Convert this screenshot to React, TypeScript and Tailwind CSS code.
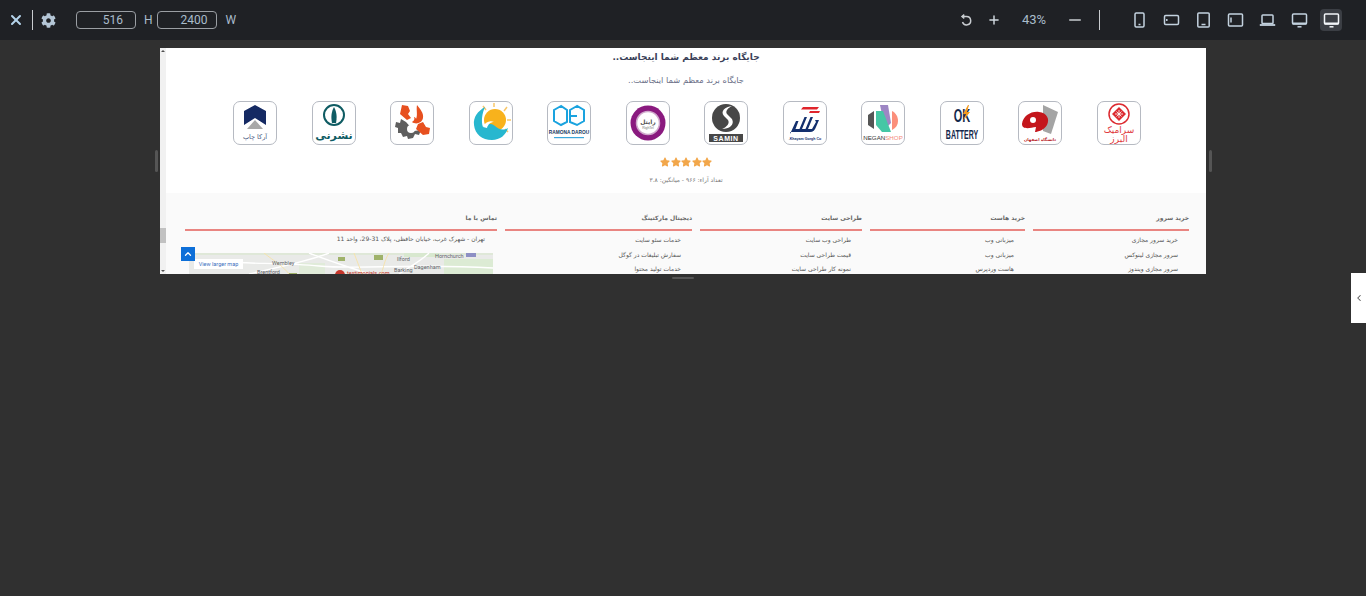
import { ChevronLeft, ChevronUp, Minus, Plus, X } from "lucide-react";
import { FaCog, FaStar } from "react-icons/fa";

const persian = "font-['DejaVu_Sans','Noto_Sans',sans-serif]";

const DeviceIcon = ({ kind, active }: { kind: string; active?: boolean }) => {
	const shapes: Record<string, React.ReactNode> = {
		phone: (
			<>
				<rect x="5" y="2" width="9" height="14" rx="1.2" />
				<path d="M8.5 13.5h2" />
			</>
		),
		phoneWide: (
			<>
				<rect x="2.5" y="4.5" width="14" height="9" rx="1.2" />
				<path d="M4.8 8v2" />
			</>
		),
		tablet: (
			<>
				<rect x="3.8" y="2" width="11.4" height="14" rx="1" />
				<path d="M7.5 13.5h4" />
			</>
		),
		tabletWide: (
			<>
				<rect x="2.5" y="3" width="14" height="12" rx="1" />
				<path d="M5 6.5v5" />
			</>
		),
		laptop: (
			<>
				<rect x="4" y="4" width="11" height="8.5" rx=".8" />
				<path d="M1.8 14h15.4" strokeWidth="1.8" />
			</>
		),
		monitor: (
			<>
				<rect x="2.5" y="3" width="14" height="10" rx="1" />
				<path d="M2.5 12.5h14" strokeWidth="2" />
				<path d="M7.5 15.8h4" />
			</>
		),
	};
	return (
		<span className={`flex h-[22px] w-[22px] items-center justify-center rounded ${active ? "bg-[#3b3e44]" : ""}`}>
			<svg width="19" height="19" viewBox="0 0 19 19" fill="none" stroke={active ? "#f2f5f8" : "#c3d2df"} strokeWidth="1.5">
				{shapes[kind]}
			</svg>
		</span>
	);
};

const Toolbar = () => (
	<div className="flex h-10 shrink-0 items-center justify-between bg-[#1f2125] pl-[8px] pr-[24px] text-[#a9bccb]">
		<div className="flex items-center">
			<X className="h-[16px] w-[16px] text-[#b4d3ea]" strokeWidth={3} />
			<span className="ml-[8px] h-5 w-px bg-[#c9ccd0]" />
			<FaCog className="ml-[8px] h-[15px] w-[15px] text-[#b4c6d6]" />
			<div className="ml-[20px] flex h-[18px] w-[60px] items-center justify-end rounded border border-[#9b9fa4] pr-[12px] font-['Roboto',sans-serif] text-[12px]">516</div>
			<span className="ml-[8px] font-['Roboto',sans-serif] text-[12px]">H</span>
			<div className="ml-[4px] flex h-[18px] w-[60px] items-center justify-end rounded border border-[#9b9fa4] pr-[8px] font-['Roboto',sans-serif] text-[12px]">2400</div>
			<span className="ml-[9px] font-['Roboto',sans-serif] text-[12px]">W</span>
		</div>
		<div className="flex items-center">
			<svg width="13" height="13" viewBox="0 0 13 13" fill="none" stroke="#c8ccd0" strokeWidth="1.5">
				<path d="M2 2.500h4.500a4.200 4.200 0 1 1-4 5.500" />
				<path d="M4.300.6 2 2.500l2.300 1.900" />
			</svg>
			<Plus className="ml-[14px] h-[14px] w-[14px] text-[#d0d8de]" strokeWidth={2.5} />
			<span className="ml-[21px] w-[26px] font-['Roboto',sans-serif] text-[13px]">43%</span>
			<Minus className="ml-[18px] h-[18px] w-[18px] text-[#c8ccd0]" strokeWidth={2} />
			<span className="ml-[15px] h-5 w-px bg-[#c9ccd0]" />
			<div className="ml-[28px] flex items-center gap-[10px]">
				<DeviceIcon kind="phone" />
				<DeviceIcon kind="phoneWide" />
				<DeviceIcon kind="tablet" />
				<DeviceIcon kind="tabletWide" />
				<DeviceIcon kind="laptop" />
				<DeviceIcon kind="monitor" />
				<DeviceIcon kind="monitor" active />
			</div>
		</div>
	</div>
);

const LogoBox = ({ children }: { children: React.ReactNode }) => (
	<div className="h-[44px] w-[44px] overflow-hidden rounded-[7px] border border-[#b6bac2] bg-white">
		<svg width="42" height="42" viewBox="0 0 42 42">
			{children}
		</svg>
	</div>
);

const logos = [
	<>
		<path d="M10 9 21 3l11 6v14L21 16 10 23z" fill="#152a63" />
		<path d="M21 18l8 9H13z" fill="#a8a8a8" />
		<text x="21" y="37" textAnchor="middle" fontSize="6.500" fill="#4a5a80" fontFamily="DejaVu Sans">آرکا چاپ</text>
	</>,
	<>
		<circle cx="21" cy="13" r="10" fill="none" stroke="#0f5c63" strokeWidth="2" />
		<path d="M21 5c-3 5-3 11-2 16h4c1-5 1-11-2-16z" fill="#0f5c63" />
		<text x="21" y="37" textAnchor="middle" fontSize="11" fontWeight="700" fill="#0f5c63" fontFamily="DejaVu Sans">نشرنی</text>
	</>,
	<>
		<path d="M5 20l4 1 1-4 5 3 8 9 7-1-2 5-4-1-2 4-5 1-1-3-4 1-2-4-3 0 0-5-3-1z" fill="#5f5f5f" />
		<circle cx="20" cy="27" r="4" fill="#fff" />
		<path d="M11 3l6 1 2 5-2 3 3 4-4 2-7-6z" fill="#e7501f" />
		<path d="M26 3c3 4 7 8 6 13-1 5-7 7-11 4 2-1 3-3 2-5 1 0 2 1 2 2 2-4 0-9 1-14z" fill="#e7501f" />
		<path d="M27 22l5-2 3 5 4 1-1 6-6 1-7-6z" fill="#e7501f" />
	</>,
	<>
		<circle cx="25" cy="18" r="11" fill="#f8b21c" />
		<path d="M24 1v4M37 5l-3 4M41 18h-4M38 30l-3-3M13 4l3 4" stroke="#f8c76a" strokeWidth="1.500" />
		<path d="M15 5C8 9 3 15 4 23c1 9 8 15 18 15 8 0 14-5 16-12-5 3-10 1-13-2-4-3-9-3-12 1-2-5-1-14 2-20z" fill="#27b7cf" />
		<path d="M13 25c2-5 7-7 11-5-3 0-6 2-7 6z" fill="#fff" />
	</>,
	<>
		<path d="M13 4 6 8v11l7 4 6-3V8zM29 4l-7 4v12l7 3 7-4V8zM22 14h7" fill="none" stroke="#1aa3df" strokeWidth="2" />
		<text x="21" y="32" textAnchor="middle" fontSize="4.800" fontWeight="700" fill="#17375e" fontFamily="Liberation Sans">RAMONA DAROU</text>
		<rect x="6" y="35" width="30" height="1.200" fill="#3aa7dc" />
	</>,
	<>
		<circle cx="21" cy="21" r="17.500" fill="#8a1a7f" />
		<circle cx="21" cy="21" r="11.500" fill="#fff" stroke="#cfa8cb" strokeWidth="1.500" />
		<text x="21" y="22" textAnchor="middle" fontSize="6" fontWeight="700" fill="#555" fontFamily="DejaVu Sans">رایتل</text>
		<text x="21" y="27" textAnchor="middle" fontSize="3.500" fill="#777" fontFamily="Liberation Sans">RighTel</text>
	</>,
	<>
		<circle cx="21" cy="16" r="14" fill="#474747" />
		<path d="M27 4c-7 1-12 5-8 10l4 4c2 3-1 7-6 9 7 0 13-4 10-10l-5-5c-2-3 1-6 5-8z" fill="#fff" />
		<rect x="4" y="32" width="34" height="8" fill="#474747" />
		<text x="21" y="39" textAnchor="middle" fontSize="7" fontWeight="700" fill="#fff" fontFamily="Liberation Sans" letterSpacing=".6">SAMIN</text>
	</>,
	<>
		<path d="M19 5h16l-2 2.500H17zM26 9h10l-1 2H25z" fill="#e0252c" />
		<path d="M6 32l6-13h2.500l-3 8h4l5-12h2.500l-5 12h3.500l5-12h2.500l-5 12h4l4-7-1-2h4l-3 7c-1 3-3 5-6 5H6z" fill="#14306e" />
		<text x="21" y="38" textAnchor="middle" fontSize="3.600" fontWeight="700" fill="#14306e" fontFamily="Liberation Sans">Khayam Gorgh Co.</text>
	</>,
	<>
		<path d="M18 3h8l3 18-6 6z" fill="#9d86c4" />
		<path d="M14 9h7l8 21h-9l-6-7z" fill="#45c7a5" />
		<path d="M6 13l6-4v18l-6-4z" fill="#555" />
		<path d="M30 9c4 2 6 6 6 10s-2 7-6 9z" fill="#fb8f7b" />
		<text x="21" y="38" textAnchor="middle" fontSize="6.200" fill="#333" fontFamily="Liberation Sans">NEGAN<tspan fill="#f48a7b">SHOP</tspan></text>
	</>,
	<>
		<text x="21" y="0" transform="translate(0 20) scale(1 1.6)" textAnchor="middle" fontSize="11" fontWeight="700" fill="#14284b" fontFamily="Liberation Sans">OK</text>
		<path d="M27 3l-5 9h3l-3 7 7-9h-3l2-7z" fill="#f39a1e" />
		<text x="21" y="0" transform="translate(0 37) scale(1 1.8)" textAnchor="middle" fontSize="7" fontWeight="700" fill="#14284b" fontFamily="Liberation Sans">BATTERY</text>
	</>,
	<>
		<path d="M24 3l15 7-7 22-8-3z" fill="#a4a4a4" />
		<path d="M3 22c1-8 9-13 17-12 8 1 11 7 8 13-3 5-9 7-12 7l1-5c-6 1-14 3-14-3z" fill="#c4161c" />
		<circle cx="14" cy="18" r="3" fill="#fff" />
		<text x="21" y="39" textAnchor="middle" fontSize="4" fontWeight="700" fill="#b72025" fontFamily="DejaVu Sans">دانشگاه اصفهان</text>
	</>,
	<>
		<circle cx="21" cy="12" r="10" fill="none" stroke="#dc2a30" strokeWidth="1.500" />
		<path d="M21 5l7 7-7 7-7-7z" fill="#dc2a30" />
		<path d="M21 8v8M17 12h8M18.500 9.500l5 5M23.500 9.500l-5 5" stroke="#fff" strokeWidth=".8" />
		<text x="21" y="31" textAnchor="middle" fontSize="9" fill="#e0383d" fontFamily="DejaVu Sans">سرامیک</text>
		<text x="21" y="40" textAnchor="middle" fontSize="9" fill="#e0383d" fontFamily="DejaVu Sans">البرز</text>
	</>,
];

const footerColumns = [
	{ title: "دیجیتال مارکتینگ", width: "w-[187px]", links: ["خدمات سئو سایت", "سفارش تبلیغات در گوگل", "خدمات تولید محتوا"] },
	{ title: "طراحی سایت", width: "w-[162px]", links: ["طراحی وب سایت", "قیمت طراحی سایت", "نمونه کار طراحی سایت"] },
	{ title: "خرید هاست", width: "w-[155px]", links: ["میزبانی وب", "میزبانی وب", "هاست وردپرس"] },
	{ title: "خرید سرور", width: "w-[156px]", links: ["خرید سرور مجازی", "سرور مجازی لینوکس", "سرور مجازی ویندوز"] },
];

const MapTile = () => (
	<div dir="ltr" className="relative mr-[4px] mt-[9px] h-[21px] w-[304px] overflow-hidden bg-[#e9eae8]">
		<svg width="304" height="21" viewBox="0 0 304 21" className="absolute inset-0">
			<rect x="0" y="0" width="304" height="2" fill="#dfe8d8" />
			<rect x="255" y="6" width="49" height="15" fill="#dcebd4" />
			<rect x="215" y="0" width="35" height="4" fill="#d8e8cf" />
			<rect x="110" y="10" width="26" height="11" fill="#e0ebd9" />
			<path d="M0 6C50 12 90 9 130 13s90-3 174 2M60 21C90 14 120 8 140 0M120 0c20 8 40 14 60 21M240 0c-8 8-20 14-30 21" stroke="#fff" strokeWidth="1.400" fill="none" />
			<path d="M75 0c10 8 20 14 25 21M165 0l8 21M200 0c-5 8-5 14-8 21" stroke="#f6e3ad" strokeWidth="1" fill="none" />
			<rect x="149" y="4" width="7" height="4" fill="#9fb26a" />
			<rect x="185" y="2" width="9" height="5" fill="#9fb26a" />
			<rect x="100" y="20" width="8" height="1" fill="#9fb26a" />
			<rect x="277" y="0" width="10" height="4" fill="#8d8fc4" />
			<circle cx="151" cy="22" r="5" fill="#c5372c" />
			<g fontFamily="Roboto" fontSize="5.500" fill="#5f6368">
				<text x="83" y="12">Wembley</text>
				<text x="68" y="21">Brentford</text>
				<text x="208" y="8">Ilford</text>
				<text x="205" y="18.500">Barking</text>
				<text x="225" y="16">Dagenham</text>
				<text x="246" y="5">Hornchurch</text>
				<text x="158" y="22" fill="#c5372c">testimonials.com</text>
			</g>
		</svg>
		<div className="absolute left-[5px] top-[6px] flex h-[10px] w-[49px] items-center justify-center bg-white font-['Roboto',sans-serif] text-[5.500px] text-[#3a6fc0]">View larger map</div>
	</div>
);

const Preview = () => (
	<div className="flex h-[226px] w-[1046px] overflow-hidden bg-white">
		<div className="relative flex w-[6px] shrink-0 flex-col justify-between bg-[#f1f1f1]">
			<span className="mx-auto mt-[2px] h-0 w-0 border-x-2 border-b-2 border-x-transparent border-b-[#505050]" />
			<span className="absolute left-0 top-[180px] h-[15px] w-full bg-[#c1c1c1]" />
			<span className="mx-auto mb-[2px] h-0 w-0 border-x-2 border-t-2 border-x-transparent border-t-[#505050]" />
		</div>
		<div dir="rtl" className={`relative min-w-0 flex-1 ${persian}`}>
			<div className="flex h-[145px] flex-col items-center">
				<h2 className="mt-[1px] text-[9px] leading-4 font-bold text-[#3a3f58]">جایگاه برند معظم شما اینجاست..</h2>
				<p className="mt-[9px] text-[8.300px] leading-3 text-[#6b7088]">جایگاه برند معظم شما اینجاست..</p>
				<div className="mt-[15px] flex w-full justify-between pl-[67px] pr-[65px]">
					{[...logos].reverse().map((logo, i) => (
						<LogoBox key={i}>{logo}</LogoBox>
					))}
				</div>
				<div className="mt-[12px] flex gap-[0.5px]">
					{[0, 1, 2, 3, 4].map((i) => (
						<FaStar key={i} className="h-[10px] w-[10px] text-[#f2a74b]" />
					))}
				</div>
				<p className="mt-[7px] text-[6px] leading-3 text-[#777]">تعداد آراء: ۹۶۶ - میانگین: ۳.۸</p>
			</div>
			<div className="flex h-[81px] gap-[8px] bg-[#fafafa] pr-[17px] pt-[18px]">
				{[...footerColumns].reverse().map((col) => (
					<div key={col.title} className={`shrink-0 ${col.width}`}>
						<h3 className="h-[20px] border-b-2 border-[#e98581] text-[6px] leading-[13px] font-bold text-[#666]">{col.title}</h3>
						<ul className="pr-[11px] pt-[4px] text-[6px] font-medium text-[#555]">
							{col.links.map((link, i) => (
								<li key={i} className="h-[14.700px] leading-[10px]">{link}</li>
							))}
						</ul>
					</div>
				))}
				<div className="w-[312px] shrink-0">
					<h3 className="h-[20px] border-b-2 border-[#e98581] text-[6px] leading-[13px] font-bold text-[#666]">تماس با ما</h3>
					<p className="pr-[12px] pt-[3px] text-[6px] leading-[10px] text-[#555]">تهران - شهرک غرب، خیابان حافظی، پلاک 31-29، واحد 11</p>
					<MapTile />
				</div>
			</div>
			<button className="absolute left-[15px] top-[199px] flex h-[14px] w-[14px] items-center justify-center bg-[#0d6fd8]">
				<ChevronUp className="h-[10px] w-[10px] text-white" strokeWidth={3} />
			</button>
		</div>
	</div>
);

export default function App() {
	return (
		<div className="relative flex h-[596px] w-[1366px] flex-col overflow-hidden bg-[#303030]">
			<Toolbar />
			<div className="mt-[8px] flex items-center justify-center">
				<Preview />
			</div>
			{/* resize handles */}
			<span className="absolute left-[155px] top-[150px] h-[22px] w-[3px] rounded bg-[#555]" />
			<span className="absolute left-[1209px] top-[150px] h-[22px] w-[3px] rounded bg-[#555]" />
			<span className="absolute left-[672px] top-[277px] h-[2px] w-[22px] rounded bg-[#555]" />
			<div className="absolute left-[1351px] top-[273px] flex h-[50px] w-[15px] items-center justify-center bg-white">
				<ChevronLeft className="h-[10px] w-[10px] text-[#555]" strokeWidth={2.5} />
			</div>
		</div>
	);
}
